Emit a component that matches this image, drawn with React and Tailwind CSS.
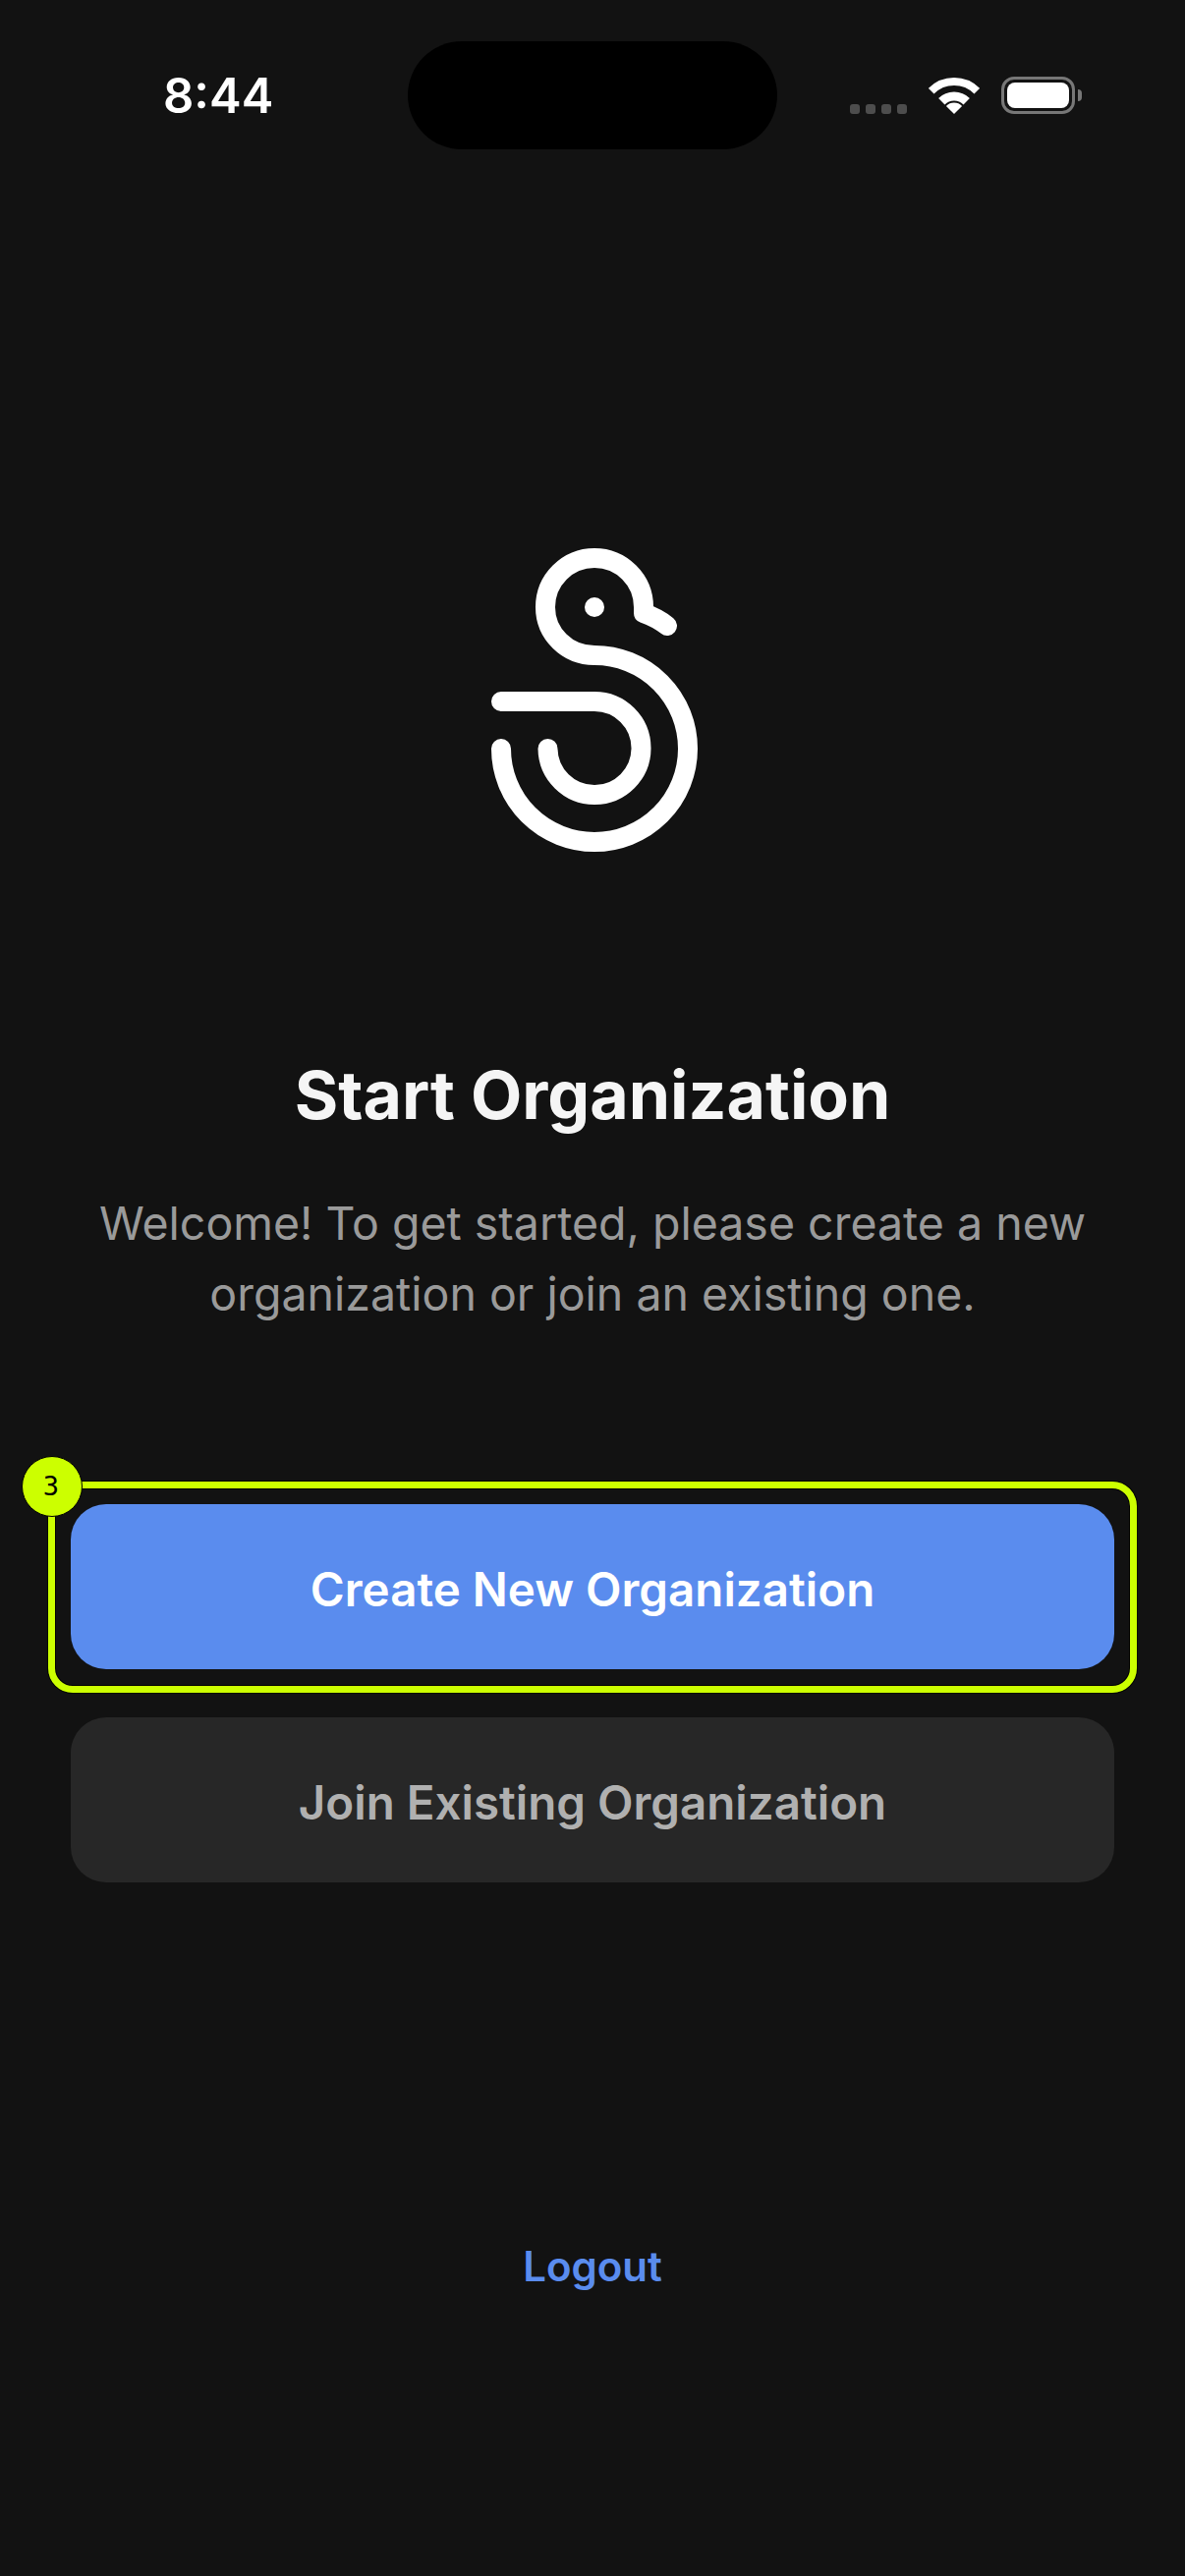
const sans = "font-['Inter','Noto_Sans',sans-serif]";

function StatusIcons() {
  return (
    <div className="flex items-end h-[38px] mt-[36px] ml-[74px]">
      <div className="flex gap-[6px]">
        {[0, 1, 2, 3].map(i => (
          <div key={i} className="w-[10px] h-[10px] rounded-[3px] bg-[#4d4d4d]" />
        ))}
      </div>
      <svg width="52" height="37" viewBox="0 0 52 37" className="ml-[22px]" fill="none" stroke="#fff">
        <path d="M2.7 13.7A33 33 0 0 1 49.3 13.7" strokeWidth="8" />
        <path d="M13.3 24.3A18 18 0 0 1 38.7 24.3" strokeWidth="9" />
        <path d="M26 37L17.9 28.9A11.5 11.5 0 0 1 34.1 28.9Z" fill="#fff" stroke="none" />
      </svg>
      <div className="ml-[22px] w-[75px] h-[38px] rounded-[13px] border-[3px] border-[#777777] p-[3px]">
        <div className="w-full h-full rounded-[8px] bg-white" />
      </div>
      <div className="ml-[3px] mb-[13px] w-[4px] h-[12px] rounded-r-[4px] bg-[#777777]" />
    </div>
  );
}

function Logo() {
  return (
    <svg width="234" height="330" viewBox="486 550 234 330" fill="none" stroke="#fff" strokeWidth="20" strokeLinecap="round" strokeLinejoin="round">
      <path d="M510 762A95 95 0 1 0 605 667C577 667 555 645 555 618A50 50 0 0 1 655 618V624Q669 629 679 637" />
      <path d="M510 714H605A47.5 47.5 0 1 1 557.5 762" />
      <circle cx="605" cy="618" r="10" fill="#fff" stroke="none" />
    </svg>
  );
}

export default function App() {
  return (
    <div className={`w-[1206px] h-[2622px] bg-[#121212] overflow-hidden flex flex-col items-center ${sans}`}>
      <div className="w-full h-[152px] flex pt-[42px]">
        <div className="w-[415px] pl-[166px]">
          <span className="block text-white text-[49px] leading-[56px] font-semibold mt-[28px]">8:44</span>
        </div>
        <div className="w-[376px] h-[110px] rounded-[55px] bg-black" />
        <StatusIcons />
      </div>

      <div className="mt-[398px]">
        <Logo />
      </div>

      <h1 className="mt-[194px] text-[68px] leading-[80px] font-bold text-[#f5f5f5]">Start Organization</h1>
      <p className="mt-[55px] w-[1062px] text-center text-[46.5px] leading-[72px] text-[#9a9a9a]">
        Welcome! To get started, please create a new<br />organization or join an existing one.
      </p>

      <div className="mt-[178px] w-[1062px] flex flex-col gap-[49px]">
        <div className="relative">
          <button className="w-full h-[168px] pt-[6px] rounded-[36px] bg-[#5a8cee] text-white text-[47.5px] font-semibold">Create New Organization</button>
          <div className="absolute -left-[23px] -right-[23px] -top-[23px] -bottom-[24px] rounded-[25px] border-[7px] border-[#ccff00] shadow-[0_0_0_1px_#000,inset_0_0_0_1px_#000]" />
          <div className="absolute -left-[50px] -top-[49px] w-[62px] h-[62px] pr-[2px] rounded-full bg-[#ccff00] border border-black flex items-center justify-center text-black text-[27px] font-['DejaVu_Sans_Mono',monospace]">3</div>
        </div>
        <button className="w-full h-[168px] pt-[6px] rounded-[36px] bg-[#272727] text-[#b0b0b0] text-[47.5px] font-semibold">Join Existing Organization</button>
      </div>

      <button className="mt-[361px] text-[42px] leading-[60px] font-semibold text-[#5a8cee]">Logout</button>
    </div>
  );
}
